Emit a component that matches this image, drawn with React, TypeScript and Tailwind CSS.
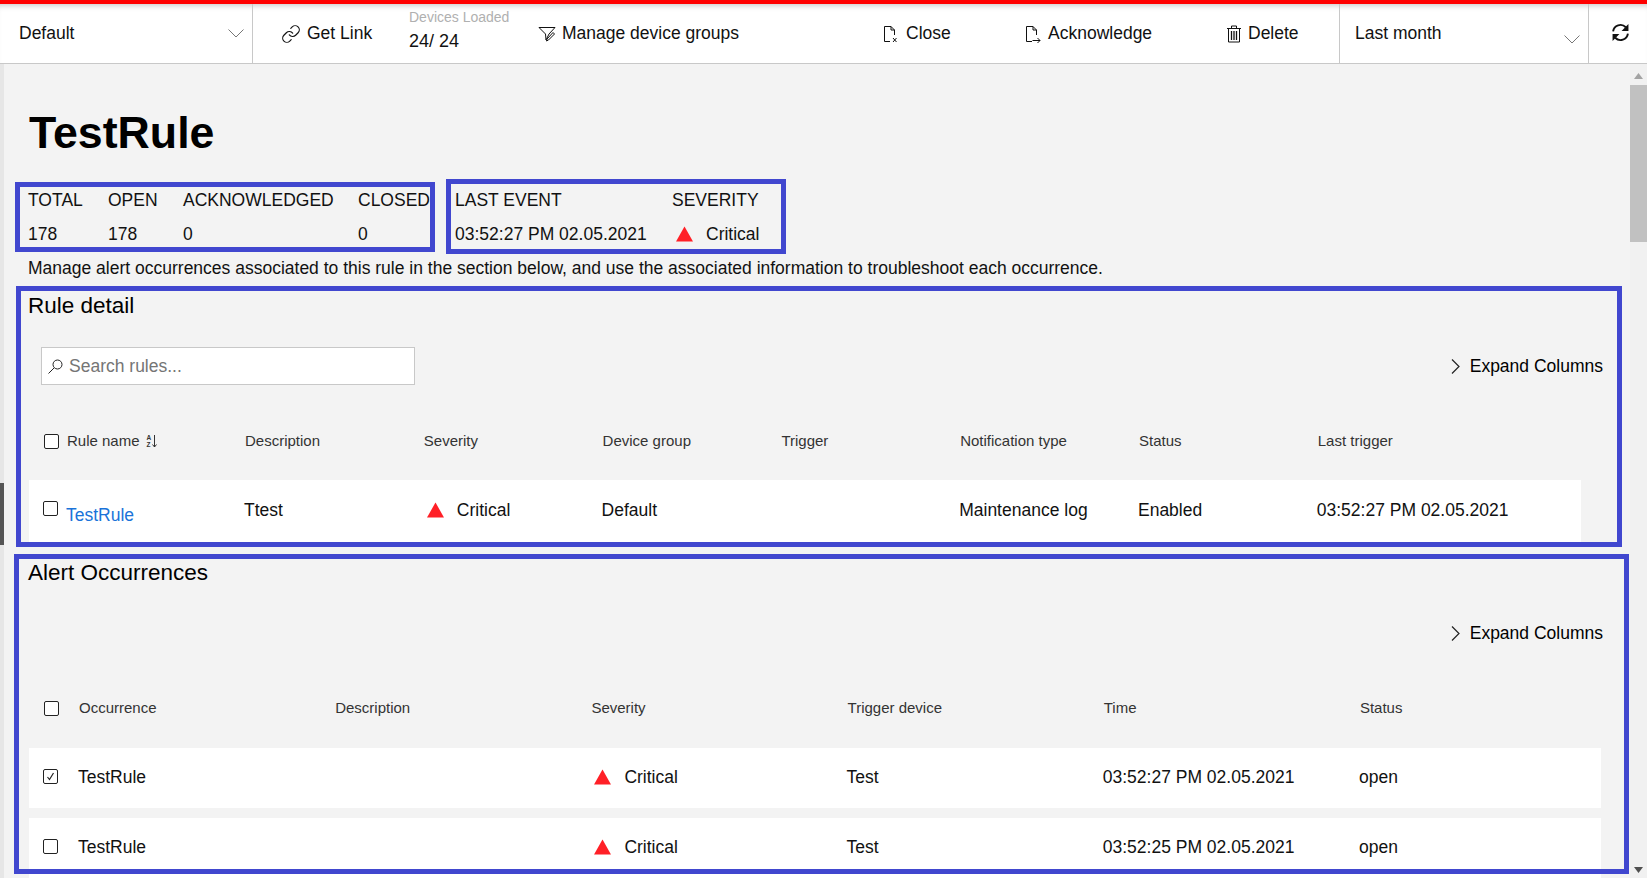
import { Link } from "lucide-react";
import type { ReactNode } from "react";

const ruleColumns = ["Description", "Severity", "Device group", "Trigger", "Notification type", "Status", "Last trigger"];
const alertColumns = ["Occurrence", "Description", "Severity", "Trigger device", "Time", "Status"];

function Triangle() {
  return (
    <svg width="17" height="16" viewBox="0 0 17 16" className="shrink-0">
      <path d="M8.5 0.5 L17 15.5 L0 15.5 Z" fill="#ff2027" />
    </svg>
  );
}

function Checkbox({ checked = false }: { checked?: boolean }) {
  return (
    <span className="flex h-[15px] w-[15px] shrink-0 items-center justify-center rounded-[2px] border-[1.5px] border-[#222] bg-white">
      {checked && (
        <svg width="9" height="9" viewBox="0 0 9 9" fill="none" stroke="#222" strokeWidth="1.2">
          <path d="M1.5 5 L3.5 7.5 L7.5 1" />
        </svg>
      )}
    </span>
  );
}

function SelectChevron() {
  return (
    <svg width="16" height="9" viewBox="0 0 16 9" fill="none" stroke="#777" strokeWidth="1">
      <path d="M0.5 0.5 L8 8 L15.5 0.5" />
    </svg>
  );
}

function FunnelIcon() {
  return (
    <svg width="18" height="16" viewBox="0 0 18 16" fill="none" stroke="#111" strokeWidth="1">
      <path d="M1 1.5 H17 L11 8 L8 14 L7.5 8 Z" />
      <path d="M9 13 L15 6.5 L16.5 8 L10.5 14 L8.5 15 Z" fill="#fff" />
    </svg>
  );
}

function FileIcon({ mark }: { mark: "x" | "arrow" }) {
  return (
    <svg width="18" height="18" viewBox="0 0 18 18" fill="none" stroke="#111" strokeWidth="1">
      <path d="M2.5 16.5 V1.5 H9 L12.5 5 V10 M9 1.5 V5 H12.5 M2.5 16.5 H8" />
      {mark === "x" ? (
        <path d="M11 13 L14.5 17 M14.5 13 L11 17" />
      ) : (
        <path d="M8.5 15.5 H16 M13.5 13 L16 15.5 L13.5 18" />
      )}
    </svg>
  );
}

function TrashIcon() {
  return (
    <svg width="16" height="18" viewBox="0 0 16 18" fill="none" stroke="#111" strokeWidth="1">
      <path d="M1 3.5 H15 M5.5 3.5 V1 H10.5 V3.5 M2.5 3.5 V17 H13.5 V3.5" />
      <path d="M5.5 6 V15 M8 6 V15 M10.5 6 V15" strokeWidth="1.3" />
    </svg>
  );
}

function SearchIcon() {
  return (
    <svg width="17" height="17" viewBox="0 0 17 17" fill="none" stroke="#222" strokeWidth="1">
      <circle cx="10.5" cy="6.5" r="4.5" />
      <path d="M7 10 L1.5 15.5" />
    </svg>
  );
}

function RefreshIcon() {
  return (
    <svg width="19" height="19" viewBox="0 0 18 18" fill="none" stroke="#111" strokeWidth="1.8">
      <path d="M2 8 A7 7 0 0 1 14 4" />
      <path d="M16.5 1 V7.5 H10 Z" fill="#111" stroke="none" />
      <path d="M16 10 A7 7 0 0 1 4 14" />
      <path d="M1.5 17 V10.5 H8 Z" fill="#111" stroke="none" />
    </svg>
  );
}

function SortIcon() {
  return (
    <span className="ml-[7px] flex items-center gap-[1px]">
      <span className="flex flex-col text-[6.5px] font-bold leading-[7px]">
        <span>A</span>
        <span>Z</span>
      </span>
      <svg width="5" height="13" viewBox="0 0 5 13" fill="none" stroke="#333" strokeWidth="1">
        <path d="M2.5 0 V12 M0.5 9.5 L2.5 12 L4.5 9.5" />
      </svg>
    </span>
  );
}

function ToolButton({ icon, label, className }: { icon: ReactNode; label: string; className: string }) {
  return (
    <div className={`flex items-center gap-[6px] ${className}`}>
      {icon}
      <span>{label}</span>
    </div>
  );
}

function Critical({ gap }: { gap: string }) {
  return (
    <span className={`flex items-center ${gap}`}>
      <Triangle />
      <span>Critical</span>
    </span>
  );
}

function ExpandColumns() {
  return (
    <div className="flex items-center justify-end gap-[10px] text-black">
      <svg width="9" height="15" viewBox="0 0 9 15" fill="none" stroke="#222" strokeWidth="1.2">
        <path d="M1 0.5 L8 7.5 L1 14.5" />
      </svg>
      <span>Expand Columns</span>
    </div>
  );
}

export default function App() {
  return (
    <div className="relative h-[878px] w-[1647px] overflow-hidden bg-[#f3f3f3] font-['Liberation_Sans',Arial,sans-serif] text-[17.5px] text-[#111]">
      <div className="h-1 bg-[#ff0000]" />
      <header className="flex h-[60px] border-b border-[#c8c8c8] bg-white pl-1 shadow-[inset_0_6px_6px_-5px_rgba(0,0,0,0.25)]">
        <div className="flex w-[249px] items-center justify-between border-r border-[#c8c8c8] pl-[15px] pr-2">
          <span>Default</span>
          <SelectChevron />
        </div>
        <div className="flex w-[1086px] items-center">
          <ToolButton icon={<Link size={20} strokeWidth={1.4} />} label="Get Link" className="ml-[28px] w-[128px]" />
          <div className="w-[129px] -translate-y-[4px] leading-none">
            <div className="pb-[8px] text-[14px] text-[#b0b0b0]">Devices Loaded</div>
            <div className="text-[18px]">24/ 24</div>
          </div>
          <ToolButton icon={<FunnelIcon />} label="Manage device groups" className="w-[344px]" />
          <ToolButton icon={<FileIcon mark="x" />} label="Close" className="w-[142px]" />
          <ToolButton icon={<FileIcon mark="arrow" />} label="Acknowledge" className="w-[202px]" />
          <ToolButton icon={<TrashIcon />} label="Delete" className="" />
        </div>
        <div className="flex w-[250px] items-center justify-between border-x border-[#c8c8c8] pl-[15px] pr-2">
          <span>Last month</span>
          <span className="pt-3"><SelectChevron /></span>
        </div>
        <div className="flex flex-1 items-center justify-center pb-[3px] pl-[4px]">
          <RefreshIcon />
        </div>
      </header>

      <div className="flex h-[814px]">
        <div className="w-1 shrink-0 bg-[#e6e6e6] pt-[419px]">
          <div className="h-[62px] bg-[#555]" />
        </div>

        <main className="w-[1626px] shrink-0 overflow-hidden pl-[24px]">
          <h1 className="pl-px pt-[43px] text-[44.7px] font-bold leading-[52px] text-black">TestRule</h1>

          <section className="mt-[32px] flex leading-[18px]">
            <div className="grid grid-cols-[80px_75px_175px_97px] gap-y-4">
              <span>TOTAL</span>
              <span>OPEN</span>
              <span>ACKNOWLEDGED</span>
              <span>CLOSED</span>
              <span>178</span>
              <span>178</span>
              <span>0</span>
              <span>0</span>
            </div>
            <div className="grid grid-cols-[217px_auto] gap-y-4">
              <span>LAST EVENT</span>
              <span>SEVERITY</span>
              <span>03:52:27 PM 02.05.2021</span>
              <Critical gap="gap-[13px] pl-[4px]" />
            </div>
          </section>

          <p className="mt-[16px] leading-[18px]">
            Manage alert occurrences associated to this rule in the section below, and use the associated information to troubleshoot each occurrence.
          </p>

          <h2 className="mt-[16px] text-[22.5px] leading-[26px] text-black">Rule detail</h2>
          <div className="mt-[28px] flex items-center justify-between pr-[27px]">
            <div className="ml-[13px] flex h-[38px] w-[374px] items-center gap-[5px] border border-[#c8c8c8] bg-white pl-[5px]">
              <SearchIcon />
              <span className="text-[#757575]">Search rules...</span>
            </div>
            <ExpandColumns />
          </div>

          <div className="mt-[46px] flex h-[20px] items-center text-[15px] text-[#333]">
            <div className="flex w-[217px] shrink-0 items-center pl-[16px]">
              <Checkbox />
              <span className="ml-[8px]">Rule name</span>
              <SortIcon />
            </div>
            <div className="grid shrink-0 grid-cols-[repeat(7,178.8px)]">
              {ruleColumns.map((col) => (
                <span key={col}>{col}</span>
              ))}
            </div>
          </div>

          <div className="ml-px mt-[29px] flex h-[66px] w-[1552px] items-center bg-white pb-[6px]">
            <div className="flex w-[215px] shrink-0 items-center pl-[14px]">
              <span className="-translate-y-[2px]"><Checkbox /></span>
              <a className="ml-[8px] translate-y-[5px] text-[#1a73d9]">TestRule</a>
            </div>
            <div className="grid shrink-0 grid-cols-[repeat(7,178.8px)] whitespace-nowrap">
              <span>Ttest</span>
              <Critical gap="gap-[13px] pl-[4px]" />
              <span>Default</span>
              <span />
              <span>Maintenance log</span>
              <span>Enabled</span>
              <span>03:52:27 PM 02.05.2021</span>
            </div>
          </div>

          <h2 className="mt-[14px] text-[22.5px] leading-[26px] text-black">Alert Occurrences</h2>
          <div className="mt-[34px] pr-[27px]">
            <ExpandColumns />
          </div>

          <div className="mt-[52px] flex h-[20px] items-center text-[15px] text-[#333]">
            <div className="flex w-[51px] shrink-0 pl-[16px]">
              <Checkbox />
            </div>
            <div className="grid shrink-0 grid-cols-[repeat(6,256.2px)]">
              {alertColumns.map((col) => (
                <span key={col}>{col}</span>
              ))}
            </div>
          </div>

          <div className="ml-px mt-[30px] flex w-[1572px] flex-col gap-[10px]">
            {[
              { time: "03:52:27 PM 02.05.2021", checked: true },
              { time: "03:52:25 PM 02.05.2021", checked: false },
            ].map((row) => (
              <div key={row.time} className="flex h-[60px] items-center bg-white pb-[2px]">
                <div className="flex w-[49px] shrink-0 -translate-y-[1px] pl-[14px]">
                  <Checkbox checked={row.checked} />
                </div>
                <div className="grid shrink-0 grid-cols-[repeat(6,256.2px)]">
                  <span>TestRule</span>
                  <span />
                  <Critical gap="gap-[13px] pl-[4px]" />
                  <span>Test</span>
                  <span>{row.time}</span>
                  <span>open</span>
                </div>
              </div>
            ))}
          </div>
        </main>

        <div className="relative flex-1 bg-[#f1f1f1]">
          <svg width="9" height="6" viewBox="0 0 9 6" className="absolute left-[4px] top-[9px]">
            <path d="M4.5 0 L9 6 H0 Z" fill="#a3a3a3" />
          </svg>
          <div className="absolute left-0 top-[21px] h-[157px] w-full bg-[#c1c1c1]" />
          <svg width="9" height="6" viewBox="0 0 9 6" className="absolute bottom-[5px] left-[4px]">
            <path d="M4.5 6 L9 0 H0 Z" fill="#505050" />
          </svg>
        </div>
      </div>

      {/* blue annotation boxes drawn on top of the screenshot */}
      <div className="absolute left-[15px] top-[182px] h-[70px] w-[420px] border-[5px] border-[#4147cf]" />
      <div className="absolute left-[446px] top-[179px] h-[75px] w-[340px] border-[5px] border-[#4147cf]" />
      <div className="absolute left-[16px] top-[286px] h-[261px] w-[1606px] border-[5px] border-[#4147cf]" />
      <div className="absolute left-[14px] top-[554px] h-[320px] w-[1615px] border-[5px] border-[#4147cf]" />
    </div>
  );
}
